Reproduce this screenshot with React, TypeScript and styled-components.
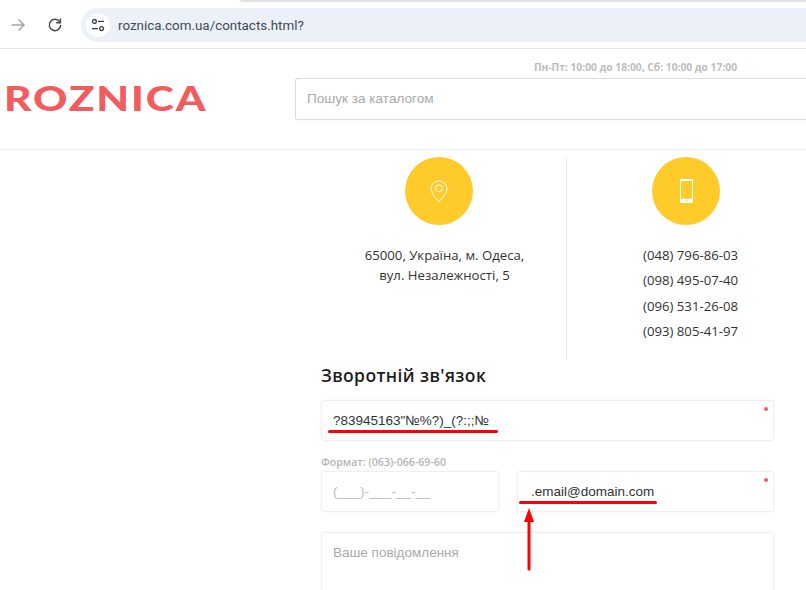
import React from 'react';
import styled, {createGlobalStyle} from 'styled-components';

const GlobalStyle = createGlobalStyle`
  html, body {
    margin: 0;
    padding: 0;
    background: #fff;
    overflow: hidden;
  }
`

const Page = styled.div`
  position: relative;
  width: 806px;
  height: 590px;
  overflow: hidden;
  font-family: "Open Sans", "Liberation Sans", sans-serif;
`

const TabEdge = styled.div`
  height: 2px;
  margin-left: 240px;
  background: #dfe3e8;
  border-bottom-left-radius: 6px;
`

const Toolbar = styled.div`
  display: flex;
  align-items: center;
  gap: 21px;
  height: 46px;
  border-bottom: 1px solid #e4e4e4;
  padding-left: 10px;
`

const NavIcon = styled.div`
  display: flex;
  width: 16px;
  height: 16px;
`

const UrlBar = styled.div`
  flex: 1;
  display: flex;
  align-items: center;
  height: 34px;
  margin-left: -3px;
  padding-left: 5px;
  background: #ecf0f9;
  border-radius: 17px 0 0 17px;
`

const SiteIcon = styled.div`
  display: flex;
  align-items: center;
  justify-content: center;
  width: 24px;
  height: 24px;
  border-radius: 50%;
  background: #fff;
`

const UrlText = styled.span`
  margin-left: 8px;
  font-family: "Roboto", "Liberation Sans", sans-serif;
  font-size: 13.4px;
  color: #3f4a57;
`

const Header = styled.header`
  display: flex;
  height: 100px;
  border-bottom: 1px solid #eee;
`

const Logo = styled.div`
  width: 295px;
  padding: 27px 0 0 4px;
  box-sizing: border-box;
`

const LogoText = styled.span`
  display: inline-block;
  transform: scaleX(1.25);
  transform-origin: left center;
  font-family: "Lato", "Liberation Sans", sans-serif;
  font-weight: 900;
  font-size: 34px;
  line-height: 44px;
  letter-spacing: 1.5px;
  color: #f25c5f;
`

const HeaderRight = styled.div`
  flex: 1;
  display: flex;
  flex-direction: column;
`

const Hours = styled.div`
  height: 29px;
  padding: 11px 69px 0 0;
  box-sizing: border-box;
  text-align: right;
  font-size: 10.25px;
  line-height: 15px;
  font-weight: 700;
  color: #bdbdbd;
`

const SearchBox = styled.div`
  height: 42px;
  box-sizing: border-box;
  padding: 0 0 2px 11px;
  display: flex;
  align-items: center;
  border: 1px solid #dcdcdc;
  border-right: none;
  border-radius: 3px 0 0 3px;
  font-family: "Liberation Sans", sans-serif;
  font-size: 13.6px;
  color: #a9a9a9;
  box-shadow: 0 1px 3px rgba(0, 0, 0, 0.03);
`

const Content = styled.main`
  width: 453px;
  margin-left: 321px;
`

const Contacts = styled.section`
  display: grid;
  grid-template-columns: 245px 208px;
  height: 203px;
  margin-top: 7px;
`

const AddressCol = styled.div`
  display: flex;
  flex-direction: column;
  align-items: center;
`

const PhoneCol = styled.div`
  display: flex;
  flex-direction: column;
  align-items: flex-start;
  border-left: 1px solid #ebebeb;
`

const Circle = styled.div<{$shift: number}>`
  display: flex;
  align-items: center;
  justify-content: center;
  width: 68px;
  height: 68px;
  border-radius: 50%;
  background: #ffcb2b;
  margin-left: ${p => p.$shift}px;
  margin-bottom: 20px;
  flex-shrink: 0;
`

const Address = styled.div`
  margin-left: 2px;
  font-size: 13.2px;
  line-height: 20px;
  color: #333;
  text-align: center;
`

const Phones = styled.div`
  margin-left: 76px;
  display: flex;
  flex-direction: column;
  gap: 5.4px;
  font-size: 13.2px;
  line-height: 20px;
  color: #333;
`

const Title = styled.h2`
  margin: 0;
  height: 40px;
  font-size: 17.5px;
  line-height: 30px;
  font-weight: 600;
  letter-spacing: 0.38px;
  color: #1d1d1d;
`

const Field = styled.div<{$height?: number; $inset?: number}>`
  position: relative;
  height: ${p => p.$height ?? 41}px;
  box-sizing: border-box;
  padding: 0 11px 0 ${p => p.$inset ?? 11}px;
  display: flex;
  align-items: center;
  border: 1px solid #efefef;
  border-radius: 3px;
  box-shadow: 0 0 3px rgba(0, 0, 0, 0.05);
  font-family: "Liberation Sans", sans-serif;
  font-size: 13.5px;
  color: #333;
`

const MessageField = styled(Field)`
  align-items: flex-start;
  padding-top: 12px;
  color: #aaa;
`

const Placeholder = styled.span`
  color: #bbb;
`

const RequiredDot = styled.i`
  position: absolute;
  top: 6px;
  right: 5px;
  width: 4px;
  height: 4px;
  border-radius: 50%;
  background: #f25c5f;
`

const Underline = styled.i<{$left: number; $width: number}>`
  position: absolute;
  left: ${p => p.$left}px;
  width: ${p => p.$width}px;
  bottom: 7px;
  height: 3px;
  border-radius: 2px;
  background: #f00;
`

const Hint = styled.div`
  margin-top: 14px;
  height: 16px;
  font-size: 10.6px;
  line-height: 15px;
  font-weight: 600;
  color: #b5b5b5;
`

const FieldRow = styled.div`
  display: grid;
  grid-template-columns: 178px 257px;
  gap: 18px;
  margin-bottom: 20px;
`

const Arrow = styled.svg`
  position: absolute;
  left: 522px;
  top: 506px;
`

const App = () => {
    return (
        <Page>
            <GlobalStyle/>
            <TabEdge/>
            <Toolbar>
                <NavIcon>
                    <svg width="16" height="16" viewBox="0 0 16 16" fill="none" stroke="#a6a6a6" strokeWidth="1.5">
                        <path d="M1.5 8H14M8.5 2.5 14 8l-5.5 5.5"/>
                    </svg>
                </NavIcon>
                <NavIcon>
                    <svg width="16" height="16" viewBox="0 0 16 16" fill="none" stroke="#474747" strokeWidth="1.5">
                        <path d="M13 5.2A5.7 5.7 0 1 0 13.7 8"/>
                        <path d="M13.4 1.6v4.2H9.2" strokeWidth="1.4"/>
                    </svg>
                </NavIcon>
                <UrlBar>
                    <SiteIcon>
                        <svg width="14" height="14" viewBox="0 0 14 14" fill="none" stroke="#3a3f45" strokeWidth="1.3">
                            <circle cx="3.4" cy="3.4" r="1.9"/>
                            <path d="M7 3.4h6M1 10.6h6"/>
                            <circle cx="10.6" cy="10.6" r="1.9"/>
                        </svg>
                    </SiteIcon>
                    <UrlText>roznica.com.ua/contacts.html?</UrlText>
                </UrlBar>
            </Toolbar>
            <Header>
                <Logo><LogoText>ROZNICA</LogoText></Logo>
                <HeaderRight>
                    <Hours>Пн-Пт: 10:00 до 18:00, Сб: 10:00 до 17:00</Hours>
                    <SearchBox>Пошук за каталогом</SearchBox>
                </HeaderRight>
            </Header>
            <Content>
                <Contacts>
                    <AddressCol>
                        <Circle $shift={-9}>
                            <svg width="18" height="23" viewBox="0 0 20 25" fill="none" stroke="#fff" strokeWidth="1.1">
                                <path d="M10 24C6 19 1.2 14.5 1.2 9.4a8.8 8.8 0 0 1 17.6 0C18.800 14.500 14 19 10 24Z"/>
                                <circle cx="10" cy="9" r="3.800"/>
                            </svg>
                        </Circle>
                        <Address>
                            65000, Україна, м. Одеса,<br/>вул. Незалежності, 5
                        </Address>
                    </AddressCol>
                    <PhoneCol>
                        <Circle $shift={85}>
                            <svg width="13" height="24" viewBox="0 0 13 24">
                                <path fill="#fff" fillRule="evenodd" d="M1 0h11a1 1 0 0 1 1 1v22a1 1 0 0 1-1 1H1a1 1 0 0 1-1-1V1a1 1 0 0 1 1-1Zm0 2v17.800h11V2Z"/>
                                <circle cx="6.500" cy="21.800" r="0.800" fill="#ffcb2b"/>
                            </svg>
                        </Circle>
                        <Phones>
                            <span>(048) 796-86-03</span>
                            <span>(098) 495-07-40</span>
                            <span>(096) 531-26-08</span>
                            <span>(093) 805-41-97</span>
                        </Phones>
                    </PhoneCol>
                </Contacts>
                <Title>Зворотній зв'язок</Title>
                <Field>
                    ?83945163"№%?)_(?:;;№
                    <RequiredDot/>
                    <Underline $left={6} $width={170}/>
                </Field>
                <Hint>Формат: (063)-066-69-60</Hint>
                <FieldRow>
                    <Field><Placeholder>(___)-___-__-__</Placeholder></Field>
                    <Field $inset={13}>
                        .email@domain.com
                        <RequiredDot/>
                        <Underline $left={1} $width={138}/>
                    </Field>
                </FieldRow>
                <MessageField $height={90}>Ваше повідомлення</MessageField>
            </Content>
            <Arrow width="14" height="66" viewBox="0 0 14 66">
                <path d="M7 2 12 16H8.500V63a1.500 1.500 0 0 1-3 0V16H2Z" fill="#f00"/>
            </Arrow>
        </Page>
    )
}

export default App;
